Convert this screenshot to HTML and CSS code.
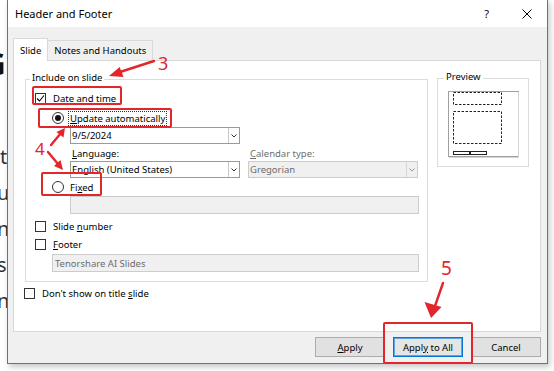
FILE: index.html
```html
<!DOCTYPE html>
<html lang="en">
<head>
  <meta charset="UTF-8" />
  <title>Header and Footer</title>
  <link rel="stylesheet" href="styles.css">
</head>
<body>
  <div class="slide-edge">
    <div class="big-g">G</div>
    <div class="edge-lines">
      <div>tr</div>
      <div class="shift">u</div>
      <div class="shift">n</div>
      <div class="shift">s</div>
      <div class="shift">n</div>
    </div>
  </div>

  <div class="dialog">
    <div class="titlebar">
      <span class="title">Header and Footer</span>
      <span class="help">?</span>
      <svg class="close" width="10" height="10" viewBox="0 0 10 10">
        <path d="M0.5 0.5 L9.5 9.5 M9.5 0.5 L0.5 9.5" stroke="#000" stroke-width="1" fill="none" />
      </svg>
    </div>

    <div class="dialog-body">
      <div class="tabs">
        <div class="tab active">Slide</div>
        <div class="tab">Notes and Handouts</div>
      </div>

      <div class="panel">
        <div class="left-col">
          <div class="group include">
            <span class="group-title">Include on slide</span>

            <div class="row check-row">
              <span class="checkbox">
                <svg width="9" height="9" viewBox="0 0 9 9">
                  <path d="M1 4.5 L3.5 7 L8 1.5" stroke="#000" stroke-width="1.1" fill="none" />
                </svg>
              </span>
              <span>Date and time</span>
            </div>

            <div class="row radio-row update">
              <span class="radio checked"></span>
              <span class="radio-label focused"><u>U</u>pdate automatically</span>
            </div>

            <div class="combo date">
              <span class="combo-text">9/5/2024</span>
              <span class="combo-btn"><svg width="6" height="4" viewBox="0 0 6 4"><path d="M0.5 0.5 L3 3 L5.5 0.5" stroke="#333" fill="none" /></svg></span>
            </div>

            <div class="label-row">
              <span class="field-label"><u>L</u>anguage:</span>
              <span class="field-label disabled"><u>C</u>alendar type:</span>
            </div>

            <div class="combo-row">
              <div class="combo">
                <span class="combo-text">English (United States)</span>
                <span class="combo-btn"><svg width="6" height="4" viewBox="0 0 6 4"><path d="M0.5 0.5 L3 3 L5.5 0.5" stroke="#333" fill="none" /></svg></span>
              </div>
              <div class="combo disabled">
                <span class="combo-text">Gregorian</span>
                <span class="combo-btn"><svg width="6" height="4" viewBox="0 0 6 4"><path d="M0.5 0.5 L3 3 L5.5 0.5" stroke="#999" fill="none" /></svg></span>
              </div>
            </div>

            <div class="row radio-row">
              <span class="radio"></span>
              <span class="radio-label">Fi<u>x</u>ed</span>
            </div>

            <div class="text-input fixed-input"></div>

            <div class="row check-row slide-number">
              <span class="checkbox"></span>
              <span>Slide <u>n</u>umber</span>
            </div>

            <div class="row check-row">
              <span class="checkbox"></span>
              <span><u>F</u>ooter</span>
            </div>

            <div class="text-input footer-input">Tenorshare AI Slides</div>
          </div>

          <div class="row check-row dont-show">
            <span class="checkbox"></span>
            <span>Don't show on title <u>s</u>lide</span>
          </div>
        </div>

        <div class="group preview">
          <span class="group-title">Preview</span>
          <svg class="preview-slide" width="72" height="67" viewBox="0 0 72 67">
            <rect x="0.5" y="0.5" width="70" height="65" fill="#fff" stroke="#a0a0a0" />
            <path d="M70.5 1 V66.5 H1" stroke="#d4d4d4" fill="none" />
            <rect x="5.5" y="1.5" width="48" height="12" fill="none" stroke="#222" stroke-dasharray="2.5 1.5" />
            <rect x="5.5" y="20.5" width="48" height="32" fill="none" stroke="#222" stroke-dasharray="2.5 1.5" />
            <rect x="5.5" y="60.5" width="16" height="3" fill="none" stroke="#222" />
            <rect x="22.5" y="60.5" width="16" height="3" fill="none" stroke="#222" />
          </svg>
        </div>
      </div>

      <div class="buttons">
        <button class="btn"><u>A</u>pply</button>
        <button class="btn btn-default">Appl<u>y</u> to All</button>
        <button class="btn">Cancel</button>
      </div>
    </div>
  </div>

  <div class="mark mark-date"></div>
  <div class="mark mark-update"></div>
  <div class="mark mark-fixed"></div>
  <div class="mark mark-apply"></div>

  <span class="step step-3">3</span>
  <span class="step step-4">4</span>
  <span class="step step-5">5</span>

  <svg class="arrows" width="554" height="371" viewBox="0 0 554 371">
    <g stroke="#e3262b" stroke-width="2.4" stroke-linecap="round" fill="none">
      <path d="M154 61 L120 72" />
      <path d="M48 152 L58 164" />
      <path d="M51 145 L61 133" />
      <path d="M443 283 L435 306" />
    </g>
    <g fill="#e3262b">
      <polygon points="109,76 119.7,67 123.5,77" />
      <polygon points="63,170 54,166 60.5,160" />
      <polygon points="65,128 63.5,137.5 56.5,132" />
      <polygon points="431,318 424.5,302 441.5,307" />
    </g>
  </svg>
</body>
</html>
```

FILE: styles.css
```css
* {
  margin: 0;
  padding: 0;
  box-sizing: border-box;
}

body {
  width: 554px;
  height: 371px;
  overflow: hidden;
  position: relative;
  background: #fff;
  font-family: 'Noto Sans', sans-serif;
  font-size: 9.5px;
  color: #000;
}

u {
  text-decoration: underline;
  text-underline-offset: 1px;
}

/* slide text peeking out behind the dialog */
.slide-edge {
  width: 7px;
  height: 371px;
  overflow: hidden;
  padding-top: 49px;
  color: #333;
  white-space: nowrap;
}

.big-g {
  font-size: 30px;
  font-weight: 700;
  line-height: 30px;
  margin-left: -16px;
  color: #111;
}

.edge-lines {
  margin-top: 60px;
  font-size: 20px;
  line-height: 36px;
}

.edge-lines .shift {
  margin-left: -3px;
}

/* dialog */
.dialog {
  position: absolute;
  left: 7px;
  top: -1px;
  width: 541px;
  height: 365px;
  border: 1px solid #707070;
  background: #f0f0f0;
  box-shadow: 2px 3px 6px rgba(0, 0, 0, 0.22);
  display: flex;
  flex-direction: column;
}

.titlebar {
  height: 27px;
  flex: none;
  background: #fff;
  display: flex;
  align-items: center;
  padding-left: 7px;
}

.title {
  flex: 1;
  font-size: 11px;
}

.help {
  font-size: 11px;
  margin-right: 33px;
}

.close {
  margin-right: 15px;
}

.dialog-body {
  flex: 1;
  padding: 11px 6px 0 5px;
  display: flex;
  flex-direction: column;
}

.tabs {
  display: flex;
  align-items: flex-end;
  height: 22px;
  position: relative;
  z-index: 1;
}

.tab {
  height: 20px;
  padding: 0 6px;
  border: 1px solid #d9d9d9;
  border-bottom: none;
  background: #f0f0f0;
  display: flex;
  align-items: center;
}

.tab + .tab {
  border-left: none;
}

.tab.active {
  height: 23px;
  margin-bottom: -1px;
  background: #fff;
}

.panel {
  height: 272px;
  flex: none;
  background: #fff;
  border: 1px solid #d9d9d9;
  padding: 18px 10px 0 11px;
  display: flex;
  gap: 9px;
}

.left-col {
  width: 403px;
}

.group {
  border: 1px solid #dcdcdc;
  position: relative;
}

.group-title {
  position: absolute;
  top: -9px;
  left: 4px;
  padding: 0 2px;
  line-height: 14px;
  background: #fff;
}

.include {
  padding: 9px 0 9px 0;
}

.row {
  display: flex;
  align-items: center;
  height: 18px;
}

.check-row {
  padding-left: 9px;
  gap: 7px;
}

.checkbox {
  width: 11px;
  height: 11px;
  border: 1px solid #333;
  background: #fff;
  display: flex;
  align-items: center;
  justify-content: center;
}

.radio-row {
  margin-top: 0;
  padding-left: 26px;
}

.radio-row.update {
  margin-top: 2px;
}

.radio {
  width: 12px;
  height: 12px;
  border: 1px solid #333;
  border-radius: 50%;
  background: #fff;
  display: flex;
  align-items: center;
  justify-content: center;
}

.radio.checked::after {
  content: '';
  width: 6px;
  height: 6px;
  border-radius: 50%;
  background: #111;
}

.radio-label {
  margin-left: 4px;
  padding: 0 1px;
  line-height: 13px;
  border: 1px dotted transparent;
}

.radio-label.focused {
  border-color: #333;
}

.combo {
  width: 170px;
  height: 17px;
  border: 1px solid #9a9a9a;
  background: #fff;
  display: flex;
  align-items: center;
}

.combo.date {
  margin-left: 44px;
}

.combo-text {
  flex: 1;
  padding-left: 1px;
  white-space: nowrap;
}

.combo-btn {
  width: 11px;
  height: 100%;
  border-left: 1px solid #c8c8c8;
  display: flex;
  align-items: center;
  justify-content: center;
}

.combo.disabled {
  background: #f0f0f0;
  border-color: #cccccc;
  color: #6d6d6d;
}

.combo.disabled .combo-btn {
  border-left-color: #d8d8d8;
}

.label-row {
  display: flex;
  gap: 8px;
  height: 14px;
  margin-top: 2px;
  padding-left: 45px;
  align-items: center;
}

.field-label {
  width: 170px;
  padding-left: 1px;
}

.field-label.disabled {
  color: #6d6d6d;
}

.combo-row {
  display: flex;
  gap: 8px;
  margin-top: 1px;
  padding-left: 44px;
}

.text-input {
  height: 18px;
  border: 1px solid #cccccc;
  background: #f0f0f0;
  color: #6d6d6d;
  display: flex;
  align-items: center;
  padding-left: 2px;
}

.fixed-input {
  margin-left: 44px;
  width: 349px;
}

.slide-number {
  margin-top: 3px;
}

.footer-input {
  margin-top: 1px;
  margin-left: 26px;
  width: 367px;
}

.dont-show {
  margin-top: 2px;
  padding-left: 0;
  margin-left: -1px;
}

.preview {
  width: 92px;
  height: 89px;
  margin-top: -1px;
  padding: 12px 0 0 10px;
}

.group.preview .group-title {
  left: 6px;
}

.preview-slide {
  display: block;
}

.buttons {
  display: flex;
  justify-content: flex-end;
  gap: 8px;
  margin-top: 5px;
  padding-right: 0;
}

.btn {
  width: 70px;
  height: 20px;
  border: 1px solid #adadad;
  background: #e1e1e1;
  font-family: 'Noto Sans', sans-serif;
  font-size: 9.5px;
  color: #000;
}

.btn-default {
  border-color: #0078d7;
  box-shadow: inset 0 0 0 1px #5aa6e6;
  background: #e5e5e5;
}

/* red tutorial annotations */
.mark {
  position: absolute;
  border: 2px solid #e3262b;
  border-radius: 2px;
}

.mark-date {
  left: 32px;
  top: 86px;
  width: 90px;
  height: 19px;
}

.mark-update {
  left: 38px;
  top: 108px;
  width: 134px;
  height: 20px;
}

.mark-fixed {
  left: 41px;
  top: 172px;
  width: 61px;
  height: 24px;
}

.mark-apply {
  left: 383px;
  top: 322px;
  width: 90px;
  height: 42px;
}

.step {
  position: absolute;
  color: #e3262b;
  line-height: 1;
}

.step-3 {
  left: 158px;
  top: 54px;
  font-size: 18px;
}

.step-4 {
  left: 35px;
  top: 140px;
  font-size: 17px;
}

.step-5 {
  left: 441px;
  top: 259px;
  font-size: 19px;
}

.arrows {
  position: absolute;
  left: 0;
  top: 0;
  pointer-events: none;
}
```
